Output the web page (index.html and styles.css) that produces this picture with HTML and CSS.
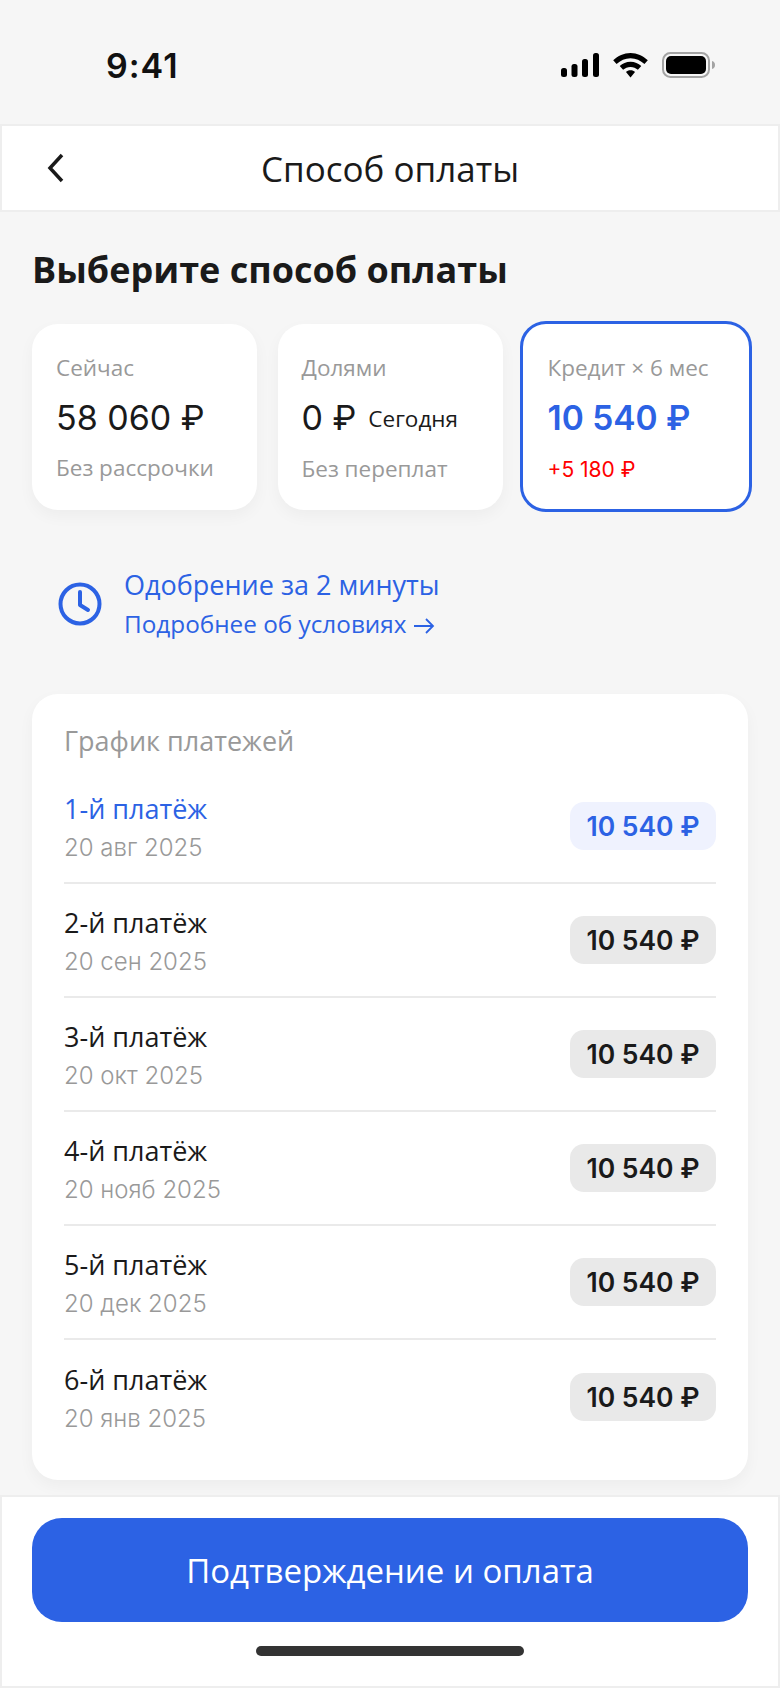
FILE: index.html
```html
<!DOCTYPE html>
<html lang="ru">

<head>
  <meta charset="UTF-8">
  <meta name="viewport" content="width=device-width, initial-scale=1.0">
  <title>Способ оплаты</title>
  <link rel="stylesheet" href="styles.css">
</head>

<body>
  <div class="status">
    <span class="time">9:41</span>
    <div class="status-icons">
      <svg width="38" height="24" viewBox="0 0 38 24">
        <rect x="0" y="15" width="6" height="9" rx="2.500" />
        <rect x="10.500" y="11" width="6" height="13" rx="2.500" />
        <rect x="21" y="6" width="6" height="18" rx="2.500" />
        <rect x="32" y="0" width="6" height="24" rx="2.500" />
      </svg>
      <svg width="35" height="25" viewBox="0 0 36 26">
        <path d="M18 0C11 0 5 3 0 7.500L3.500 11.500C7.500 8 12.500 5.500 18 5.500S28.500 8 32.500 11.500L36 7.500C31 3 25 0 18 0Z" />
        <path d="M18 9C13.500 9 9.800 10.800 6.800 13.500L10.300 17.500C12.400 15.700 15 14.500 18 14.500S23.600 15.700 25.700 17.500L29.200 13.500C26.200 10.800 22.500 9 18 9Z" />
        <path d="M18 18C16 18 14.500 18.700 13.300 19.800L18 25.500L22.700 19.800C21.500 18.700 20 18 18 18Z" />
      </svg>
      <svg width="54" height="26" viewBox="0 0 54 26">
        <rect x="1" y="1" width="46" height="24" rx="7.500" fill="none" stroke="#a3a3a3" stroke-width="2" />
        <rect x="4" y="4" width="40" height="18" rx="5" />
        <path d="M50 9C52 9.500 53 11 53 13S52 16.500 50 17Z" fill="#a3a3a3" />
      </svg>
    </div>
  </div>

  <header class="nav">
    <svg class="back" width="20" height="30" viewBox="0 0 20 30">
      <path d="M16 2L4 15L16 28" />
    </svg>
    <span class="nav-title">Способ оплаты</span>
  </header>

  <h1 class="title">Выберите способ оплаты</h1>

  <div class="plans">
    <div class="plan">
      <div class="plan-label">Сейчас</div>
      <div class="plan-sum">58 060 ₽</div>
      <div class="plan-note">Без рассрочки</div>
    </div>
    <div class="plan">
      <div class="plan-label">Долями</div>
      <div class="plan-sum">0 ₽<span class="plan-today">Сегодня</span></div>
      <div class="plan-note">Без переплат</div>
    </div>
    <div class="plan active">
      <div class="plan-label">Кредит × 6 мес</div>
      <div class="plan-sum">10 540 ₽</div>
      <div class="plan-note">+5 180 ₽</div>
    </div>
  </div>

  <div class="info">
    <svg class="clock" width="44" height="44" viewBox="0 0 44 44">
      <circle cx="22" cy="22" r="19.500" />
      <path d="M22 10V23L30 28" />
    </svg>
    <div>
      <div class="info-main">Одобрение за 2 минуты</div>
      <div class="info-link">Подробнее об условиях
        <svg class="arrow" width="22" height="18" viewBox="0 0 22 18">
          <path d="M1 9H20M13 2L20 9L13 16" />
        </svg>
      </div>
    </div>
  </div>

  <section class="schedule">
    <div class="schedule-title">График платежей</div>
    <div class="row first">
      <div>
        <div class="row-name">1-й платёж</div>
        <div class="row-date">20 авг 2025</div>
      </div>
      <div class="pill">10 540 ₽</div>
    </div>
    <div class="row">
      <div>
        <div class="row-name">2-й платёж</div>
        <div class="row-date">20 сен 2025</div>
      </div>
      <div class="pill">10 540 ₽</div>
    </div>
    <div class="row">
      <div>
        <div class="row-name">3-й платёж</div>
        <div class="row-date">20 окт 2025</div>
      </div>
      <div class="pill">10 540 ₽</div>
    </div>
    <div class="row">
      <div>
        <div class="row-name">4-й платёж</div>
        <div class="row-date">20 нояб 2025</div>
      </div>
      <div class="pill">10 540 ₽</div>
    </div>
    <div class="row">
      <div>
        <div class="row-name">5-й платёж</div>
        <div class="row-date">20 дек 2025</div>
      </div>
      <div class="pill">10 540 ₽</div>
    </div>
    <div class="row">
      <div>
        <div class="row-name">6-й платёж</div>
        <div class="row-date">20 янв 2025</div>
      </div>
      <div class="pill">10 540 ₽</div>
    </div>
  </section>

  <footer class="bottom">
    <button class="pay">Подтверждение и оплата</button>
    <div class="home"></div>
  </footer>
</body>

</html>
```

FILE: styles.css
```css
* {
  box-sizing: border-box;
}

body {
  margin: 0;
  width: 780px;
  height: 1688px;
  overflow: hidden;
  background-color: #f6f6f6;
  color: #1a1a1a;
  font-family: "Open Sans", "Noto Sans", sans-serif;
}

.status {
  height: 124px;
  padding: 48px 64px 0 106px;
  display: flex;
  justify-content: space-between;
  align-items: flex-start;
}

.time {
  font-family: "Inter", sans-serif;
  font-size: 34px;
  font-weight: 600;
  letter-spacing: 1px;
  line-height: 36px;
  color: #111;
}

.status-icons {
  display: flex;
  align-items: center;
  gap: 14px;
  padding-top: 4px;
}

.status-icons svg {
  display: block;
  fill: #000;
}

.nav {
  height: 88px;
  padding-top: 2px;
  background-color: #fff;
  border: 2px solid #eee;
  position: relative;
  display: flex;
  justify-content: center;
  align-items: center;
}

.back {
  position: absolute;
  left: 44px;
  top: 27px;
  fill: none;
  stroke: #1a1a1a;
  stroke-width: 3.500;
}

.nav-title {
  font-size: 35px;
  line-height: 46px;
}

.title {
  margin: 32px 0 0 32px;
  font-size: 36px;
  font-weight: 700;
  line-height: 52px;
}

.plans {
  margin: 28px 0 0 32px;
  display: grid;
  grid-template-columns: 225px 225px 229px;
  column-gap: 20.500px;
  height: 186px;
}

.plan {
  background-color: #fff;
  border-radius: 26px;
  padding: 28px 24px 0;
  box-shadow: 0 6px 16px rgba(0, 0, 0, 0.04);
}

.plan.active {
  margin: -3px 0 -2px -3px;
  padding: 28px 0 0 24.500px;
  border: 3px solid #2c62e4;
  box-shadow: none;
}

.plan-label,
.plan-note {
  font-size: 22.500px;
  line-height: 32px;
  color: #999;
}

.plan-sum {
  margin-top: 10px;
  font-family: "Inter", sans-serif;
  font-size: 34px;
  font-weight: 400;
  line-height: 48px;
  white-space: nowrap;
}

.plan-today {
  margin-left: 12px;
  font-family: "Open Sans", sans-serif;
  font-size: 22.500px;
  font-weight: 500;
  vertical-align: 3px;
}

.plan-note {
  margin-top: 10px;
}

.active .plan-sum {
  color: #2c62e4;
  font-size: 33.500px;
  font-weight: 600;
}

.active .plan-note {
  margin-top: 12px;
  color: #ff0000;
  font-family: "Inter", sans-serif;
  font-size: 21px;
}

.info {
  margin: 55px 0 0 58px;
  display: flex;
  align-items: center;
  gap: 22px;
}

.clock {
  fill: none;
  stroke: #2c62e4;
  stroke-width: 4;
  stroke-linecap: round;
  stroke-linejoin: round;
}

.info-main {
  font-size: 27px;
  font-weight: 500;
  line-height: 39px;
  color: #2c62e4;
}

.info-link {
  font-size: 24.300px;
  line-height: 39px;
  color: #2c62e4;
}

.arrow {
  fill: none;
  stroke: #2c62e4;
  stroke-width: 1.800;
  vertical-align: -2px;
}

.schedule {
  margin: 51px 32px 0;
  height: 786px;
  padding: 27px 32px 0;
  background-color: #fff;
  border-radius: 26px;
  box-shadow: 0 6px 16px rgba(0, 0, 0, 0.04);
}

.schedule-title {
  font-size: 27px;
  line-height: 40px;
  color: #999;
}

.row {
  height: 114px;
  border-bottom: 2px solid #eaeaea;
  display: flex;
  justify-content: space-between;
  align-items: center;
}

.first {
  margin-top: 9px;
}

.row:last-child {
  border-bottom: none;
}

.row-name {
  margin-top: 4px;
  font-size: 27px;
  font-weight: 500;
  line-height: 40px;
}

.row-date {
  font-family: "Inter", sans-serif;
  font-size: 24px;
  font-weight: 300;
  line-height: 38px;
  color: #999;
}

.first .row-name {
  color: #2c62e4;
}

.pill {
  width: 146px;
  height: 48px;
  border-radius: 14px;
  background-color: #e9e9e9;
  font-family: "Inter", sans-serif;
  font-size: 26.500px;
  font-weight: 600;
  line-height: 48px;
  text-align: center;
}

.first .pill {
  background-color: #eff2fe;
  color: #2c62e4;
}

.bottom {
  margin-top: 15px;
  height: 193px;
  padding: 21px 30px 0;
  background-color: #fff;
  border: 2px solid #eee;
}

.pay {
  display: block;
  width: 716px;
  height: 104px;
  border: none;
  border-radius: 30px;
  background-color: #2c62e4;
  color: #fff;
  font-family: "Open Sans", sans-serif;
  font-size: 33px;
}

.home {
  width: 268px;
  height: 10px;
  margin: 24px auto 0;
  border-radius: 5px;
  background-color: #333;
}
```
